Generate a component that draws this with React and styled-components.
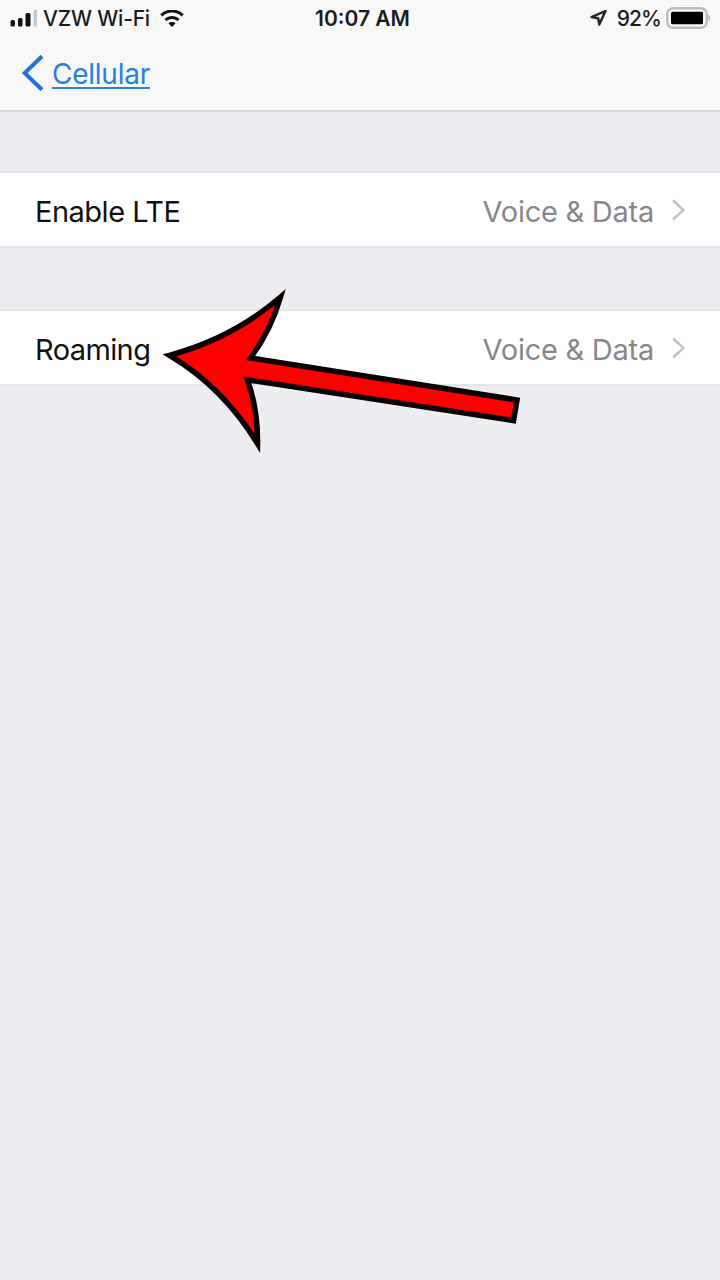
import React from 'react'
import styled, { createGlobalStyle } from 'styled-components'

const GlobalStyle = createGlobalStyle`
    * { box-sizing:border-box; }
    body {
        margin:0;
        background-color:#eeedf2;
        font-family:Inter, "Liberation Sans", sans-serif;
    }
`;

const Screen = styled.div`
    position:relative;
    width:720px;
    height:1280px;
    overflow:hidden;
    background-color:#eeedf2;
`;
const Header = styled.header`
    height:112px;
    background-color:#f8f8f8;
    border-bottom:2px solid #d7d6db;
`;
const StatusBar = styled.div`
    height:37px;
    display:grid;
    grid-template-columns:1fr auto 1fr;
    align-items:center;
    padding:0 8px 0 10px;
    color:#1c1c1c;
`;
const StatusGroup = styled.div`
    display:flex;
    align-items:center;
    justify-content:${p => p.$end ? "flex-end" : "flex-start"};
`;
const StatusText = styled.span`
    font-size:21px;
    line-height:26px;
    white-space:nowrap;
    font-weight:${p => p.$weight || 500};
    letter-spacing:${p => p.$spacing || "0"};
    margin:${p => p.$margin || "0"};
`;
const BackLink = styled.a`
    display:flex;
    align-items:center;
    height:72px;
    padding-left:21px;
    gap:8px;
    color:#2680dc;
    cursor:pointer;
`;
const BackText = styled.span`
    padding-top:1px;
    font-size:28px;
    line-height:34px;
    letter-spacing:-0.25px;
    text-decoration:underline;
    text-decoration-thickness:2px;
    text-underline-offset:3px;
    text-decoration-skip-ink:none;
`;
const List = styled.main`
    display:flex;
    flex-direction:column;
    gap:61px;
    padding-top:59px;
`;
const Row = styled.div`
    height:77px;
    display:flex;
    align-items:center;
    padding:0 34px 0 35px;
    background-color:#ffffff;
    border-top:2px solid #e6e5ea;
    border-bottom:2px solid #e6e5ea;
`;
const Label = styled.span`
    flex:1;
    padding-top:4px;
    font-size:29px;
    line-height:36px;
    color:#111111;
    letter-spacing:${p => p.$spacing};
`;
const Value = styled.span`
    padding-top:4px;
    font-size:29px;
    line-height:36px;
    color:#87878b;
    letter-spacing:-0.25px;
    margin-right:17px;
`;
const Pointer = styled.svg`
    position:absolute;
    left:150px;
    top:280px;
`;

const Signal = () => (
  <svg width="28" height="18" viewBox="0 0 28 18">
    <rect x="0.5" y="10" width="4.5" height="6.5" rx="1.5" fill="#111" />
    <rect x="8" y="8" width="4.5" height="8.5" rx="1.5" fill="#111" />
    <rect x="15.5" y="3" width="5" height="13.5" rx="1.5" fill="#111" />
    <rect x="23.5" y="0" width="3.5" height="16.5" rx="1" fill="#c8c8c8" />
  </svg>
)

const Wifi = () => (
  <svg width="24" height="18" viewBox="0 0 24 18" fill="none" stroke="#111" strokeWidth="3">
    <path d="M1.3 5.4C7.3 -.4 16.7 -.4 22.7 5.4" />
    <path d="M5.4 10C9.2 6.5 14.8 6.5 18.6 10" />
    <path d="M12 17L8.4 13.3C10.4 11.5 13.6 11.5 15.6 13.3Z" fill="#111" stroke="none" />
  </svg>
)

const Location = () => (
  <svg width="18" height="18" viewBox="0 0 18 18">
    <path d="M15.5 1L1.5 7.1L8.2 8.3L9.3 14.5Z" fill="none" stroke="#222" strokeWidth="2.4" strokeLinejoin="round" />
  </svg>
)

const Battery = () => (
  <svg width="46" height="24" viewBox="0 0 46 24">
    <rect x="1.2" y="1.2" width="39.6" height="19.6" rx="6" fill="#f8f8f8" stroke="#bcbcbc" strokeWidth="2.4" />
    <rect x="5" y="4.7" width="32" height="12.5" rx="1.5" fill="#000" />
    <path d="M42.5 7.5Q46 11 42.5 14.5Z" fill="#b5b5b5" />
  </svg>
)

const BackChevron = () => (
  <svg width="23" height="36" viewBox="0 0 23 36">
    <path d="M21 1.2L3.7 18L21 34.8" fill="none" stroke="#1f74dc" strokeWidth="4" />
  </svg>
)

const Chevron = () => (
  <svg width="15" height="22" viewBox="0 0 15 22">
    <path d="M2 1.5L12.5 11L2 20.5" fill="none" stroke="#c2c2c4" strokeWidth="2.4" />
  </svg>
)

const SettingRow = ({ label, value, spacing }) => (
  <Row>
    <Label $spacing={spacing}>{label}</Label>
    <Value>{value}</Value>
    <Chevron />
  </Row>
)

const App = () => {
  return (
    <Screen>
      <GlobalStyle />
      <Header>
        <StatusBar>
          <StatusGroup>
            <Signal />
            <StatusText $weight={450} $spacing="-0.2px" $margin="0 10px 0 5px">VZW Wi-Fi</StatusText>
            <Wifi />
          </StatusGroup>
          <StatusText $weight={600} $margin="0 0 0 3px">10:07 AM</StatusText>
          <StatusGroup $end>
            <Location />
            <StatusText $margin="0 5px 0 9px" $spacing="-0.9px">92%</StatusText>
            <Battery />
          </StatusGroup>
        </StatusBar>
        <BackLink>
          <BackChevron />
          <BackText>Cellular</BackText>
        </BackLink>
      </Header>
      <List>
        <SettingRow label="Enable LTE" value="Voice & Data" spacing="-0.5px" />
        <SettingRow label="Roaming" value="Voice & Data" spacing="-0.6px" />
      </List>
      <Pointer width="380" height="185" viewBox="150 280 380 185">
        <path
          d="M169.5 355.3Q233 338 280.5 297Q271 330 250.5 358L517 400L513.5 420.5L247.5 379.8Q258 410 257.5 443.5Q223 387 169.5 355.3Z"
          fill="#fe0000"
          stroke="#0a0000"
          strokeWidth="5.5"
          strokeMiterlimit="12"
        />
      </Pointer>
    </Screen>
  )
}

export default App
